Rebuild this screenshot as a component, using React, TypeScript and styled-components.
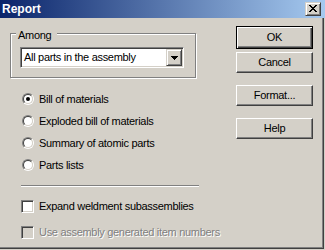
import React from 'react';
import styled, { createGlobalStyle } from 'styled-components';

const GlobalStyle = createGlobalStyle`
    html, body {
        margin: 0;
        padding: 0;
        background: #d4d0c8;
    }
    body {
        font-family: "Liberation Sans", Arial, sans-serif;
        font-size: 11px;
        letter-spacing: -0.3px;
        color: #000;
    }
`;

const Window = styled.div`
    width: 325px;
    height: 249px;
    display: flex;
    flex-direction: column;
    background: #d4d0c8;
    overflow: hidden;
`;

const TitleBar = styled.div`
    flex: none;
    height: 18px;
    display: flex;
    align-items: center;
    justify-content: space-between;
    padding: 0 4px 0 2px;
    background: linear-gradient(to right, #0a246a, #a6caf0);
`;

const TitleText = styled.span`
    font-size: 12px;
    font-weight: bold;
    line-height: 18px;
    letter-spacing: 0;
    color: #fff;
`;

const CloseButton = styled.div`
    width: 16px;
    height: 14px;
    box-sizing: border-box;
    border: 1px solid;
    border-color: #d4d0c8 #404040 #404040 #d4d0c8;
    box-shadow: inset 1px 1px 0 #fff, inset -1px -1px 0 #808080;
    background: #d4d0c8;
    display: flex;
    align-items: center;
    justify-content: center;
    padding: 0 1px 1px 0;
`;

const Body = styled.div`
    flex: 1;
    width: 324px;
    box-sizing: border-box;
    border-right: 1px solid #404040;
    border-bottom: 1px solid #404040;
    box-shadow: inset -1px -1px 0 #808080;
    display: grid;
    grid-template-columns: 189px 77px;
    column-gap: 37px;
    align-items: start;
    padding: 8px 0 0 10px;
`;

const LeftColumn = styled.div`
    display: flex;
    flex-direction: column;
    padding-top: 7px;
`;

const GroupBox = styled.div`
    position: relative;
    width: 186px;
    height: 45px;
    box-sizing: border-box;
    border: 1px solid #808080;
    box-shadow: inset 1px 1px 0 #fff, 1px 1px 0 #fff;
    padding: 13px 0 0 9px;
`;

const Legend = styled.span`
    position: absolute;
    top: -5px;
    left: 5px;
    padding: 0 6px 0 2px;
    line-height: 13px;
    background: #d4d0c8;
`;

const Combo = styled.div`
    width: 164px;
    height: 21px;
    box-sizing: border-box;
    display: flex;
    border: 1px solid;
    border-color: #808080 #fff #fff #808080;
    box-shadow: inset 1px 1px 0 #404040, inset -1px -1px 0 #d4d0c8;
    padding: 1px;
    background: #fff;
`;

const ComboText = styled.span`
    flex: 1;
    padding-left: 2px;
    line-height: 17px;
    white-space: nowrap;
`;

const ComboArrow = styled.div`
    width: 16px;
    height: 17px;
    box-sizing: border-box;
    border: 1px solid;
    border-color: #d4d0c8 #404040 #404040 #d4d0c8;
    box-shadow: inset 1px 1px 0 #fff, inset -1px -1px 0 #808080;
    background: #d4d0c8;
    display: flex;
    align-items: center;
    justify-content: center;
`;

const RadioList = styled.div`
    display: flex;
    flex-direction: column;
    margin-top: 10px;
`;

const RadioRow = styled.label`
    height: 22px;
    display: flex;
    align-items: center;
    gap: 5px;
    line-height: 14px;
    white-space: nowrap;
`;

const RadioOuter = styled.span`
    flex: none;
    width: 12px;
    height: 12px;
    margin-left: 12px;
    box-sizing: border-box;
    border-radius: 50%;
    border: 1px solid;
    border-color: #808080 #fff #fff #808080;
    display: flex;
    align-items: center;
    justify-content: center;
`;

const RadioInner = styled.span<{ $checked: boolean }>`
    width: 10px;
    height: 10px;
    box-sizing: border-box;
    border-radius: 50%;
    border: 1px solid;
    border-color: #404040 #d4d0c8 #d4d0c8 #404040;
    background: #fff;
    display: flex;
    align-items: center;
    justify-content: center;

    &::after {
        content: '';
        display: ${p => (p.$checked ? 'block' : 'none')};
        width: 4px;
        height: 4px;
        border-radius: 50%;
        background: #000;
    }
`;

const Separator = styled.div`
    width: 178px;
    height: 2px;
    box-sizing: border-box;
    margin: 9px 0 0 11px;
    border-top: 1px solid #808080;
    border-bottom: 1px solid #fff;
`;

const CheckList = styled.div`
    display: flex;
    flex-direction: column;
    gap: 13px;
    margin-top: 13px;
`;

const CheckRow = styled.label<{ $disabled?: boolean }>`
    height: 13px;
    display: flex;
    align-items: center;
    gap: 5px;
    line-height: 13px;
    white-space: nowrap;
    color: ${p => (p.$disabled ? '#808080' : '#000')};
    text-shadow: ${p => (p.$disabled ? '1px 1px 0 #fff' : 'none')};
`;

const CheckBox = styled.span<{ $disabled?: boolean }>`
    flex: none;
    width: 13px;
    height: 13px;
    margin-left: 11px;
    box-sizing: border-box;
    border: 1px solid;
    border-color: #808080 #fff #fff #808080;
    box-shadow: inset 1px 1px 0 #404040, inset -1px -1px 0 #d4d0c8;
    background: ${p => (p.$disabled ? '#d4d0c8' : '#fff')};
`;

const ButtonColumn = styled.div`
    display: flex;
    flex-direction: column;
`;

const Button = styled.div<{ $default?: boolean; $gap: number }>`
    width: 77px;
    height: ${p => (p.$default ? 23 : 21)}px;
    margin-top: ${p => p.$gap}px;
    box-sizing: border-box;
    display: flex;
    align-items: center;
    justify-content: center;
    background: #d4d0c8;
    border: 1px solid;
    border-color: ${p => (p.$default ? '#000' : '#fff #404040 #404040 #fff')};
    box-shadow: ${p =>
        p.$default
            ? 'inset 1px 1px 0 #fff, inset -1px -1px 0 #404040, inset -2px -2px 0 #808080'
            : 'inset -1px -1px 0 #808080, inset 1px 1px 0 #d4d0c8'};
    line-height: 13px;
`;

const xRows = ['11000011', '01100110', '00111100', '00011000', '00111100', '01100110', '11000011'];
const xPath = xRows
    .map((row, y) =>
        row
            .split('')
            .map((c, x) => (c === '1' ? `M${x} ${y}h1v1h-1z` : ''))
            .join(''),
    )
    .join('');

const CloseIcon = () => (
    <svg width="8" height="7" viewBox="0 0 8 7" shapeRendering="crispEdges">
        <path d={xPath} fill="#000" />
    </svg>
);

const DownArrow = () => (
    <svg width="7" height="4" viewBox="0 0 7 4" shapeRendering="crispEdges">
        <path d="M0 0H7V1H6V2H5V3H4V4H3V3H2V2H1V1H0Z" fill="#000" />
    </svg>
);

const reportTypes = ['Bill of materials', 'Exploded bill of materials', 'Summary of atomic parts', 'Parts lists'];

const buttons = [
    { label: 'OK', gap: 0, isDefault: true },
    { label: 'Cancel', gap: 3 },
    { label: 'Format...', gap: 12 },
    { label: 'Help', gap: 12 },
];

const App = () => {
    const selected = 0;
    return (
        <>
            <GlobalStyle />
            <Window>
                <TitleBar>
                    <TitleText>Report</TitleText>
                    <CloseButton>
                        <CloseIcon />
                    </CloseButton>
                </TitleBar>
                <Body>
                    <LeftColumn>
                        <GroupBox>
                            <Legend>Among</Legend>
                            <Combo>
                                <ComboText>All parts in the assembly</ComboText>
                                <ComboArrow>
                                    <DownArrow />
                                </ComboArrow>
                            </Combo>
                        </GroupBox>

                        <RadioList>
                            {reportTypes.map((t, i) => (
                                <RadioRow key={t}>
                                    <RadioOuter>
                                        <RadioInner $checked={i === selected} />
                                    </RadioOuter>
                                    {t}
                                </RadioRow>
                            ))}
                        </RadioList>

                        <Separator />

                        <CheckList>
                            <CheckRow>
                                <CheckBox />
                                Expand weldment subassemblies
                            </CheckRow>
                            <CheckRow $disabled>
                                <CheckBox $disabled />
                                Use assembly generated item numbers
                            </CheckRow>
                        </CheckList>
                    </LeftColumn>

                    <ButtonColumn>
                        {buttons.map(b => (
                            <Button key={b.label} $default={b.isDefault} $gap={b.gap}>
                                {b.label}
                            </Button>
                        ))}
                    </ButtonColumn>
                </Body>
            </Window>
        </>
    );
};

export default App;
